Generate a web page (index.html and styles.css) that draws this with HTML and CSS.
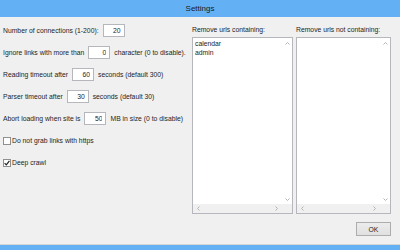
FILE: index.html
```html
<!DOCTYPE html>
<html lang="en">
<head>
    <meta charset="UTF-8">
    <title>Settings</title>
    <link rel="stylesheet" href="styles.css">
</head>
<body>
    <div class="window">
        <div class="titlebar">Settings</div>

        <div class="main">
            <!-- Opciones de la izquierda -->
            <div class="options">
                <div class="row">
                    <span>Number of connections (1-200):</span>
                    <input class="num" type="text" value="20">
                </div>
                <div class="row">
                    <span>Ignore links with more than</span>
                    <input class="num" type="text" value="0">
                    <span>character (0 to disable).</span>
                </div>
                <div class="row">
                    <span>Reading timeout after</span>
                    <input class="num" type="text" value="60">
                    <span>seconds (default 300)</span>
                </div>
                <div class="row">
                    <span>Parser timeout after</span>
                    <input class="num" type="text" value="30">
                    <span>seconds (default 30)</span>
                </div>
                <div class="row">
                    <span>Abort loading when site is</span>
                    <input class="num" type="text" value="50">
                    <span>MB in size (0 to disable)</span>
                </div>
                <div class="row row-check">
                    <span class="check"></span>
                    <span>Do not grab links with https</span>
                </div>
                <div class="row row-check">
                    <span class="check">
                        <svg width="6" height="6" viewBox="0 0 6 6"><path d="M0.6 3.2 L2.3 4.9 L5.4 0.9" fill="none" stroke="#222" stroke-width="1.2"/></svg>
                    </span>
                    <span>Deep crawl</span>
                </div>
            </div>

            <!-- Listas de filtros -->
            <div class="lists">
                <div class="list-group list-wide">
                    <div class="list-label">Remove urls containing:</div>
                    <div class="listbox">
                        <div class="list-text">calendar<br>admin</div>
                        <div class="vscroll">
                            <svg width="5" height="3" viewBox="0 0 5 3"><path d="M0.5 2.5 L2.5 0.5 L4.5 2.5" fill="none" stroke="#b4b4b4"/></svg>
                            <svg width="5" height="3" viewBox="0 0 5 3"><path d="M0.5 0.5 L2.5 2.5 L4.5 0.5" fill="none" stroke="#b4b4b4"/></svg>
                        </div>
                        <div class="hscroll">
                            <svg width="3" height="5" viewBox="0 0 3 5"><path d="M2.5 0.5 L0.5 2.5 L2.5 4.5" fill="none" stroke="#b4b4b4"/></svg>
                            <svg width="3" height="5" viewBox="0 0 3 5"><path d="M0.5 0.5 L2.5 2.5 L0.5 4.5" fill="none" stroke="#b4b4b4"/></svg>
                        </div>
                        <div class="corner"></div>
                    </div>
                </div>
                <div class="list-group">
                    <div class="list-label">Remove urls not containing:</div>
                    <div class="listbox">
                        <div class="list-text"></div>
                        <div class="vscroll">
                            <svg width="5" height="3" viewBox="0 0 5 3"><path d="M0.5 2.5 L2.5 0.5 L4.5 2.5" fill="none" stroke="#b4b4b4"/></svg>
                            <svg width="5" height="3" viewBox="0 0 5 3"><path d="M0.5 0.5 L2.5 2.5 L4.5 0.5" fill="none" stroke="#b4b4b4"/></svg>
                        </div>
                        <div class="hscroll">
                            <svg width="3" height="5" viewBox="0 0 3 5"><path d="M2.5 0.5 L0.5 2.5 L2.5 4.5" fill="none" stroke="#b4b4b4"/></svg>
                            <svg width="3" height="5" viewBox="0 0 3 5"><path d="M0.5 0.5 L2.5 2.5 L0.5 4.5" fill="none" stroke="#b4b4b4"/></svg>
                        </div>
                        <div class="corner"></div>
                    </div>
                </div>
            </div>
        </div>

        <div class="footer">
            <button class="btn">OK</button>
        </div>

        <div class="statusbar"></div>
    </div>
</body>
</html>
```

FILE: styles.css
```css
:root {
    --frame: #63b1f4;
    --window-bg: #f0f0f0;
    --text: #1e1e1e;
    --field-border: #b5b7bd;
}

body {
    margin: 0;
    background: var(--window-bg);
    font-family: 'Liberation Sans', Arial, sans-serif;
    font-size: 6.8px;
    color: var(--text);
}

.window {
    width: 400px;
    height: 250px;
    display: flex;
    flex-direction: column;
    overflow: hidden;
}

.titlebar {
    height: 17px;
    flex: none;
    background: var(--frame);
    display: flex;
    align-items: center;
    justify-content: center;
    font-size: 8px;
    color: #1a1a1a;
}

.main {
    height: 197px;
    flex: none;
    display: flex;
}

/* Columna izquierda */
.options {
    width: 192px;
    flex: none;
    padding: 7px 0 0 3px;
    box-sizing: border-box;
    display: flex;
    flex-direction: column;
    gap: 9px;
}

.row {
    height: 13px;
    display: flex;
    align-items: center;
    gap: 4px;
    white-space: nowrap;
}

.row-check {
    gap: 1px;
}

.num {
    width: 22px;
    height: 13px;
    box-sizing: border-box;
    margin: 0;
    padding: 0 3px 0 0;
    border: 1px solid var(--field-border);
    background: #fff;
    font: inherit;
    color: var(--text);
    text-align: right;
    outline: none;
}

.check {
    width: 8px;
    height: 8px;
    box-sizing: border-box;
    border: 1px solid #8f8f8f;
    background: #fff;
    display: flex;
    align-items: center;
    justify-content: center;
}

/* Listas */
.lists {
    display: flex;
    gap: 3px;
    padding-top: 8px;
}

.list-group {
    width: 95px;
    display: flex;
    flex-direction: column;
    gap: 2px;
}

.list-wide {
    width: 101px;
}

.list-label {
    height: 10px;
    line-height: 10px;
    white-space: nowrap;
}

.listbox {
    height: 177px;
    box-sizing: border-box;
    border: 1px solid var(--field-border);
    background: #fff;
    display: grid;
    grid-template-columns: 1fr 9px;
    grid-template-rows: 1fr 9px;
}

.list-text {
    padding: 1px 2px;
    line-height: 9px;
}

.vscroll {
    display: flex;
    flex-direction: column;
    justify-content: space-between;
    align-items: center;
    padding: 4px 0 3px;
}

.hscroll {
    background: var(--window-bg);
    display: flex;
    justify-content: space-between;
    align-items: center;
    padding: 0 5px 0 4px;
}

.corner {
    background: var(--window-bg);
}

/* Pie */
.footer {
    height: 30px;
    flex: none;
    display: flex;
    justify-content: flex-end;
    align-items: flex-start;
    padding: 8px 9px 0 0;
    box-sizing: border-box;
}

.btn {
    width: 35px;
    height: 14px;
    margin: 0;
    padding: 0;
    border: 1px solid #adadad;
    background: linear-gradient(#ececec, #e0e0e0);
    font: inherit;
    color: var(--text);
}

.statusbar {
    flex: 1;
    border-top: 1px solid #d6d6d6;
    background: var(--frame);
}
```
